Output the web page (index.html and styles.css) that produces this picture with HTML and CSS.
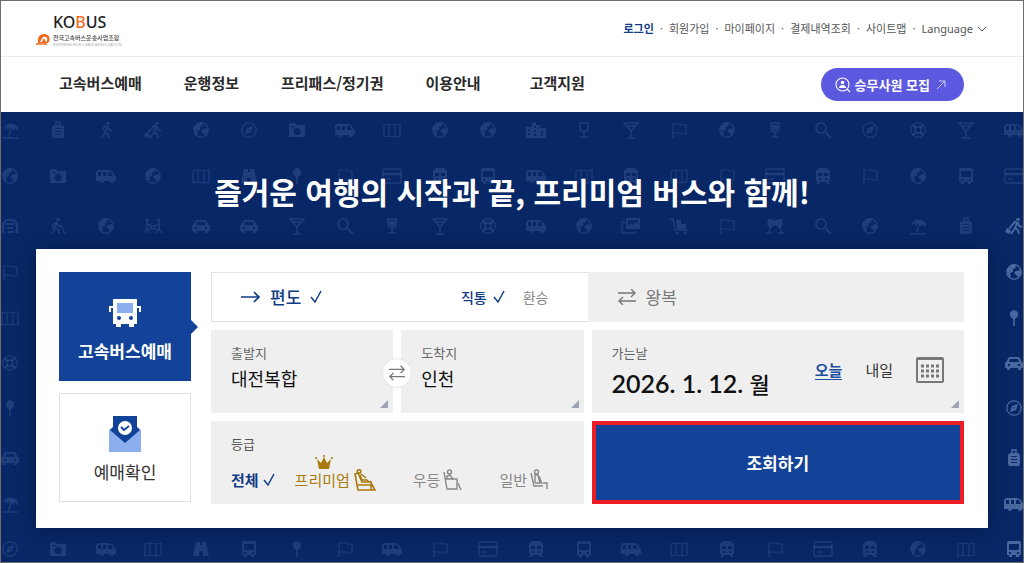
FILE: index.html
```html
<!DOCTYPE html>
<html lang="ko">
<head>
<meta charset="utf-8">
<meta name="viewport" content="width=device-width, initial-scale=1">
<title>KOBUS 전국고속버스운송사업조합</title>
<link rel="stylesheet" href="styles.css">
</head>
<body>
<svg class="sprite" aria-hidden="true">
  <symbol id="palm" viewBox="0 0 20 20"><path d="M2 18h16M9 17c0-4 1-7 3-10" fill="none" stroke="currentColor" stroke-width="1.500"/><path d="M4 9c0-4 4-6 8-5 4 0 7 3 6 7l-3-3-1 3-3-4-4 3V7z" fill="currentColor"/></symbol>
  <symbol id="luggage" viewBox="0 0 20 20"><path d="M8 5V2h4v3" fill="none" stroke="currentColor" stroke-width="1.500"/><path fill-rule="evenodd" d="M6 5h8l2 2v9l-1 2H5l-1-2V7zM7 8v1h6V8zm0 3v1h6v-1zm0 3v1h6v-1z" fill="currentColor"/></symbol>
  <symbol id="walk" viewBox="0 0 20 20"><circle cx="12" cy="3.500" r="1.800" fill="currentColor"/><path d="M6 10l3-4 3 1 1 3 3 1M11 7l-2 5 3 2 1 4M9 12l-1 3-3 3" fill="none" stroke="currentColor" stroke-width="1.700"/></symbol>
  <symbol id="traveler" viewBox="0 0 20 20"><circle cx="14" cy="3.500" r="1.800" fill="currentColor"/><path d="M8 9l3-3 3 1 1 3 3 1M13 7l-2 5 3 2 1 4M11 12l-2 3-2 3M8 9l-3 4" fill="none" stroke="currentColor" stroke-width="2"/><path d="M3 12l4 3-2 3-4-2z" fill="currentColor"/></symbol>
  <symbol id="hiker" viewBox="0 0 20 20"><circle cx="10" cy="3.500" r="1.800" fill="currentColor"/><path d="M9 6l-2 6-3 6M9 6l-4 3v4M9 7l2 3 3 1M8 12l3 2v4M13 9l4 9" fill="none" stroke="currentColor" stroke-width="1.600"/></symbol>
  <symbol id="globe" viewBox="0 0 20 20"><circle cx="10" cy="10" r="7.200" fill="none" stroke="currentColor" stroke-width="1.400"/><path d="M3 8c2-3 5-5 8-5l1 3-3 1v3l-3 1 1 3-2 1zM12 9l4-1 1 3-3 4-2-2-2-2z" fill="currentColor"/></symbol>
  <symbol id="compass" viewBox="0 0 20 20"><circle cx="10" cy="10" r="7.200" fill="none" stroke="currentColor" stroke-width="1.300"/><path fill-rule="evenodd" d="M14 6l-2 6-6 2 2-6zm-4 3-1 1 1 1 1-1z" fill="currentColor"/></symbol>
  <symbol id="camera" viewBox="0 0 20 20"><path fill-rule="evenodd" d="M3 3h5l1 2h9v12H2V5zM10 8a3 3 0 1 0 0 7 3 3 0 0 0 0-7zM4 6v1h4V6z" fill="currentColor"/></symbol>
  <symbol id="van" viewBox="0 0 20 20"><path fill-rule="evenodd" d="M2 4h11l4 2 3 5v4h-2a2 2 0 0 1-4 0H8a2 2 0 0 1-4 0H0V6zm0 2v4h3V6zm5 0v4h3V6zm5 0v4h5l-2-4z" fill="currentColor"/></symbol>
  <symbol id="map" viewBox="0 0 20 20"><path d="M2 5l5-1 6 1 5-1v12l-5 1-6-1-5 1zM7 4v12M13 5v12" fill="none" stroke="currentColor" stroke-width="1.200"/></symbol>
  <symbol id="city" viewBox="0 0 20 20"><path fill-rule="evenodd" d="M0 7h6V3l4-1v3h4v3h6v10H0zM2 9v2h2V9zm6-3v2h2V6zm0 4v2h2v-2zm4-3v2h1V7zm3 4v2h2v-2zM2 13v2h2v-2zm6 1v2h2v-2zm7 0v2h2v-2z" fill="currentColor"/></symbol>
  <symbol id="wine" viewBox="0 0 20 20"><path d="M6 3h8v5c0 5-8 5-8 0zM10 12v5M6 17h8" fill="none" stroke="currentColor" stroke-width="1.500"/><path d="M7 5h6v3c0 3-6 3-6 0z" fill="currentColor"/></symbol>
  <symbol id="glass" viewBox="0 0 20 20"><path d="M6 3h8v5c0 5-8 5-8 0zM10 12v5M6 17h8" fill="none" stroke="currentColor" stroke-width="1.500"/></symbol>
  <symbol id="cocktail" viewBox="0 0 20 20"><path d="M3 3h14l-7 8zM10 10v8M6 18h8M5 6h10" fill="none" stroke="currentColor" stroke-width="1.500"/></symbol>
  <symbol id="flag" viewBox="0 0 20 20"><path d="M4 18V4h7l1 1h5v9h-4l-2-1H4" fill="none" stroke="currentColor" stroke-width="1.200"/></symbol>
  <symbol id="search" viewBox="0 0 20 20"><circle cx="8" cy="8" r="5" fill="none" stroke="currentColor" stroke-width="1.700"/><path d="M12 12l6 6" stroke="currentColor" stroke-width="2"/></symbol>
  <symbol id="ring" viewBox="0 0 20 20"><circle cx="10" cy="10" r="7.200" fill="none" stroke="currentColor" stroke-width="1.300"/><circle cx="10" cy="10" r="3" fill="none" stroke="currentColor" stroke-width="1.300"/><path d="M5 5l3 3M15 5l-3 3M5 15l3-3M15 15l-3-3" stroke="currentColor" stroke-width="2"/></symbol>
  <symbol id="binoculars" viewBox="0 0 20 20"><path d="M5 3h4v3h2V3h4l3 14h-6v-5H8v5H2z" fill="currentColor"/></symbol>
  <symbol id="pin" viewBox="0 0 20 20"><circle cx="10" cy="6.500" r="4.200" fill="currentColor"/><path d="M10 10v8" stroke="currentColor" stroke-width="1.600"/></symbol>
  <symbol id="card" viewBox="0 0 20 20"><rect x="1" y="3" width="18" height="14" rx="1" fill="none" stroke="currentColor" stroke-width="1.300"/><path d="M1 8h18" stroke="currentColor" stroke-width="2.500"/><path d="M4 13h5" stroke="currentColor" stroke-width="1.300"/></symbol>
  <symbol id="train" viewBox="0 0 20 20"><path fill-rule="evenodd" d="M6 2h8l3 3v10h-2l2 3h-3l-1-2H7l-1 2H3l2-3H3V5zm-1 5v3h4V7zm6 0v3h4V7zM6 12v2h2v-2zm6 0v2h2v-2z" fill="currentColor"/></symbol>
  <symbol id="coach" viewBox="0 0 20 20"><path fill-rule="evenodd" d="M4 2h12l1 2v12h-2v2h-3v-2H8v2H5v-2H3V4zm1 3v6h10V5zm0 8v2h2v-2zm8 0v2h2v-2z" fill="currentColor"/></symbol>
  <symbol id="helmet" viewBox="0 0 20 20"><path d="M3 17V9c1-7 13-7 14 0v8" fill="none" stroke="currentColor" stroke-width="2.500"/><path d="M6 8h8M7 12h6M8 16h6" stroke="currentColor" stroke-width="2"/></symbol>
  <symbol id="people" viewBox="0 0 20 20"><g fill="none" stroke="currentColor" stroke-width="1.500"><circle cx="4" cy="4" r="1"/><circle cx="16" cy="4" r="1"/><path d="M4 6v6l-2 5M4 12l3 5M4 8l5 2M16 6v6l2 5M16 12l-3 5M16 8l-5 2M8 10h4v3H8z"/></g></symbol>
  <symbol id="car" viewBox="0 0 20 20"><path fill-rule="evenodd" d="M5 4h10l3 5 1 1v5h-2v2h-3v-2H6v2H3v-2H1v-5l1-1zm1 2L5 9h10l-1-3zM4 11v2h2v-2zm10 0v2h2v-2z" fill="currentColor"/></symbol>
  <symbol id="photos" viewBox="0 0 20 20"><path fill-rule="evenodd" d="M5 2h14v11H5zm2 2v6l3-3 2 2 3-3 2 2V4z" fill="currentColor"/><path d="M4 6H1v11h13v-2" fill="none" stroke="currentColor" stroke-width="1.500"/></symbol>
  <symbol id="cart" viewBox="0 0 20 20"><path d="M1 3h3l2 11h13" fill="none" stroke="currentColor" stroke-width="1.600"/><path d="M7 4h5v4h5v5H8z" fill="currentColor"/><circle cx="8" cy="17" r="1.500" fill="currentColor"/><circle cx="16" cy="17" r="1.500" fill="currentColor"/></symbol>
  <symbol id="cheers" viewBox="0 0 20 20"><path d="M3 3l6 1 1 1 1-1 6-1 1 6-4 3-4-3-4 3-4-3z" fill="currentColor"/><path d="M5 10l-1 6M1 17h6M15 10l1 6M13 17h6" stroke="currentColor" stroke-width="1.500"/></symbol>
  <symbol id="arrow" viewBox="0 0 20 12"><path d="M0 6h18M13 1l5 5-5 5" fill="none" stroke="currentColor" stroke-width="1.700"/></symbol>
  <symbol id="swap" viewBox="0 0 20 16"><path d="M1 4h17M14 0l4 4-4 4M19 12H2M6 8l-4 4 4 4" fill="none" stroke="currentColor" stroke-width="1.400"/></symbol>
  <symbol id="check" viewBox="0 0 12 14"><path d="M1 7l4 5 6-11" fill="none" stroke="currentColor" stroke-width="1.500"/></symbol>
</svg>

<div class="page">
  <header class="header">
    <div class="utility">
      <a class="logo" href="#">
        <svg class="logo-mark" viewBox="0 0 14 12" aria-hidden="true"><path d="M2 10C1 4 4 1 8 1c6 0 7 6 4 9z" fill="#f06a20"/><path d="M4 9l3-5c3-1 5 1 4 4l-1 1-2-4-2 4z" fill="#fff"/><path d="M0 11h11" stroke="#f06a20" stroke-width="1.500"/></svg>
        <span class="logo-text">
          <span class="logo-name">KO<b>B</b>US</span>
          <span class="logo-sub">전국고속버스운송사업조합</span>
          <span class="logo-en">EXPRESS BUS LINES ASSOCIATION</span>
        </span>
      </a>
      <ul class="links">
        <li><a class="login" href="#">로그인</a></li>
        <li><a href="#">회원가입</a></li>
        <li><a href="#">마이페이지</a></li>
        <li><a href="#">결제내역조회</a></li>
        <li><a href="#">사이트맵</a></li>
        <li><button class="language" type="button">Language<svg viewBox="0 0 10 6" aria-hidden="true"><path d="M1 1l4 4 4-4" fill="none" stroke="currentColor"/></svg></button></li>
      </ul>
    </div>
    <nav class="nav">
      <a href="#">고속버스예매</a>
      <a href="#">운행정보</a>
      <a href="#">프리패스/정기권</a>
      <a href="#">이용안내</a>
      <a class="support" href="#">고객지원</a>
      <a class="recruit" href="#">
        <svg class="recruit-icon" viewBox="0 0 16 16" aria-hidden="true"><circle cx="7.500" cy="7.500" r="6.500" fill="none" stroke="currentColor" stroke-width="1.100"/><circle cx="7.500" cy="5.500" r="1.800" fill="currentColor"/><path d="M4 11c0-4 7-4 7 0z" fill="currentColor"/><path d="M12 12l3 3" stroke="currentColor" stroke-width="1.300"/></svg>
        승무사원 모집
        <svg class="recruit-arrow" viewBox="0 0 10 10" aria-hidden="true"><path d="M1 9l8-8M3 1h6v6" fill="none" stroke="currentColor"/></svg>
      </a>
    </nav>
  </header>

  <main class="hero">
    <div class="pattern" id="pattern" aria-hidden="true"></div>
    <h1 class="title">즐거운 여행의 시작과 끝, 프리미엄 버스와 함께!</h1>
    <section class="booking">
      <div class="tabs">
        <button class="tab tab-active" type="button">
          <svg class="tab-bus" viewBox="0 0 34 28" aria-hidden="true"><path d="M5 0h24v25h-3v3h-5v-3h-8v3H8v-3H5z" fill="#fff"/><path d="M5 8H2v5M29 8h3v5" fill="none" stroke="#fff" stroke-width="2"/><path d="M9 4h16v10H9z" fill="#8aaeee"/><circle cx="11" cy="19" r="2" fill="#124398"/><circle cx="23" cy="19" r="2" fill="#124398"/></svg>
          고속버스예매
        </button>
        <button class="tab" type="button">
          <svg class="tab-mail" viewBox="0 0 32 36" aria-hidden="true"><path d="M0 14l4-3h24l4 3v22H0z" fill="#8aaeee"/><path d="M4 0h24v11l3 3-15 13L1 14l3-3z" fill="#124398"/><circle cx="16" cy="12" r="7" fill="#fff"/><path d="M12 11l3 3 5-4" fill="none" stroke="#124398" stroke-width="1.800"/></svg>
          예매확인
        </button>
      </div>
      <form class="form">
        <div class="trip">
          <div class="trip-side trip-oneway">
            <label class="choice"><input type="radio" name="trip" checked><svg class="i-arrow" aria-hidden="true"><use href="#arrow"/></svg>편도<svg class="i-check" aria-hidden="true"><use href="#check"/></svg></label>
            <div class="route">
              <label class="choice route-on"><input type="radio" name="route" checked>직통<svg class="i-check" aria-hidden="true"><use href="#check"/></svg></label>
              <label class="choice"><input type="radio" name="route">환승</label>
            </div>
          </div>
          <div class="trip-side trip-round">
            <label class="choice"><input type="radio" name="trip"><svg class="i-swap" aria-hidden="true"><use href="#swap"/></svg>왕복</label>
          </div>
        </div>
        <div class="places">
          <button class="field corner" type="button"><span class="caption">출발지</span><span class="value">대전복합</span></button>
          <button class="field corner" type="button"><span class="caption">도착지</span><span class="value">인천</span></button>
          <button class="swap" type="button" aria-label="출발지 도착지 교체"><svg aria-hidden="true"><use href="#swap"/></svg></button>
        </div>
        <div class="field corner date">
          <div>
            <span class="caption">가는날</span>
            <span class="day">2026. 1. 12. <span class="weekday">월</span></span>
          </div>
          <div class="quick">
            <button class="today" type="button">오늘</button>
            <button type="button">내일</button>
            <button class="calendar" type="button" aria-label="달력"><svg viewBox="0 0 28 26" aria-hidden="true"><rect x="1" y="1" width="26" height="24" rx="1" fill="none" stroke="#777" stroke-width="2"/><path d="M1 2h26" stroke="#777" stroke-width="2"/><path d="M5 9h18M5 14h18M5 19h18" stroke="#777" stroke-width="3" stroke-dasharray="3 2"/></svg></button>
          </div>
        </div>
        <fieldset class="field grades">
          <legend class="caption">등급</legend>
          <div class="grade-list">
            <label class="choice grade-all"><input type="radio" name="grade" checked>전체<svg class="i-check" aria-hidden="true"><use href="#check"/></svg></label>
            <label class="choice premium"><input type="radio" name="grade"><svg class="crown" viewBox="0 0 18 14" aria-hidden="true"><path d="M2 4l4 4 3-6 3 6 4-4-2 10H4z" fill="currentColor"/><circle cx="1" cy="3" r="1" fill="currentColor"/><circle cx="9" cy="1" r="1" fill="currentColor"/><circle cx="17" cy="3" r="1" fill="currentColor"/></svg>프리미엄<svg class="seat" viewBox="0 0 22 22" aria-hidden="true"><g fill="none" stroke="currentColor" stroke-width="1.600"><path d="M4 21L1 5l3-1 4 9h9v8zM4 16h13M16 12l5 9h-4"/><circle cx="5" cy="2.500" r="1.800"/><path d="M6 6l2 5h5l2 2M7 5l5 4"/></g></svg></label>
            <label class="choice"><input type="radio" name="grade">우등<svg class="seat seat-mid" viewBox="0 0 19 22" aria-hidden="true"><g fill="none" stroke="currentColor" stroke-width="1.400"><path d="M1 3l3 17h10V10H5M2 10h4"/><circle cx="6.500" cy="3" r="2"/><path d="M4 10V7l3-1 3 4M15 14l3 7"/></g></svg></label>
            <label class="choice"><input type="radio" name="grade">일반<svg class="seat seat-mid" viewBox="0 0 19 22" aria-hidden="true"><g fill="none" stroke="currentColor" stroke-width="1.400"><path d="M1 4l3 13h9M13 14h4v6"/><circle cx="6.500" cy="3" r="2"/><path d="M5 14V6h3l2 8H5M9 7l3 8"/></g></svg></label>
          </div>
        </fieldset>
        <button class="submit" type="submit">조회하기</button>
      </form>
    </section>
  </main>
</div>
<script src="pattern.js"></script>
</body>
</html>
```

FILE: styles.css
```css
* { box-sizing: border-box; }

body {
  margin: 0;
  font-family: "Noto Sans CJK KR", sans-serif;
  color: #222;
}

a { color: inherit; text-decoration: none; }

button {
  margin: 0;
  padding: 0;
  border: 0;
  background: none;
  color: inherit;
  font: inherit;
  cursor: pointer;
}

svg { display: block; flex: none; }

.sprite { position: absolute; width: 0; height: 0; }

.page {
  display: flex;
  flex-direction: column;
  min-height: 100vh;
  border: 1px solid #6e6e6e;
}

.header { background: #fff; }

.utility {
  display: flex;
  justify-content: space-between;
  align-items: center;
  height: 56px;
  padding: 0 36px 0 35px;
  border-bottom: 1px solid #ececec;
}

.logo {
  display: flex;
  align-items: flex-end;
  gap: 3px;
}

.logo-mark { width: 14px; height: 12px; margin-bottom: 2px; }

.logo-text { display: flex; flex-direction: column; }

.logo-name {
  font: 500 16px/22px "Noto Sans", sans-serif;
  color: #222;
}

.logo-name b { font-weight: 500; color: #f06a20; }

.logo-sub { font-size: 6px; line-height: 9px; font-weight: 500; color: #444; }

.logo-en { font: 4px/5px "Liberation Sans", sans-serif; color: #aaa; }

.links {
  display: flex;
  margin: 0;
  padding: 0;
  list-style: none;
  font-size: 11px;
  line-height: 16px;
  color: #555;
}

.links li + li::before { content: "·"; margin: 0 6px; }

.login { font-weight: 700; color: #123c85; }

.language {
  display: inline-flex;
  align-items: center;
  gap: 4px;
  font-family: "Noto Sans", sans-serif;
}

.language svg { width: 10px; height: 6px; }

.nav {
  display: flex;
  align-items: center;
  gap: 42px;
  height: 55px;
  padding: 0 59px 0 58px;
  font-size: 15px;
  line-height: 24px;
  font-weight: 700;
  color: #2a2a2a;
}

.nav > a:not(.recruit) { padding-bottom: 3px; }

.support { margin-left: 7px; }

.recruit {
  display: flex;
  align-items: center;
  gap: 4px;
  height: 33px;
  margin-left: auto;
  padding: 0 18px 0 14px;
  border-radius: 17px;
  background: #5c58df;
  color: #fff;
  font-size: 13px;
}

.recruit-icon { width: 16px; height: 16px; }
.recruit-arrow { width: 10px; height: 10px; margin-left: 2px; opacity: 0.7; }

.hero {
  position: relative;
  flex: 1;
  padding: 56px 35px 34px;
  overflow: hidden;
  background: #072766;
}

.pattern {
  position: absolute;
  inset: 8px 0 0 0;
  display: grid;
  grid-template-rows: 46px 50px 46px 46px 45px 45px 50px 46px 45px;
  margin: 0 -1px;
  color: rgba(140, 165, 215, 0.18);
}

.pattern-row { display: flex; justify-content: space-between; }
.pattern svg { width: 20px; height: 20px; }
.pattern-lit svg:last-child { color: rgba(140, 165, 215, 0.5); }

.title {
  position: relative;
  margin: 0 0 35px;
  text-align: center;
  color: #fff;
  font-size: 30px;
  line-height: 46px;
  font-weight: 700;
}

.booking {
  position: relative;
  display: flex;
  gap: 20px;
  padding: 23px 24px 24px 23px;
  background: #fff;
  box-shadow: 0 0 20px rgba(0, 0, 0, 0.3);
}

.tabs {
  display: flex;
  flex: none;
  flex-direction: column;
  gap: 12px;
  width: 132px;
}

.tab {
  display: flex;
  flex-direction: column;
  align-items: center;
  height: 109px;
  padding-top: 22px;
  border: 1px solid #e2e2e2;
  font-size: 17px;
  line-height: 28px;
  color: #333;
}

.tab-active {
  position: relative;
  padding-top: 26px;
  border-color: #124398;
  background: #124398;
  color: #fff;
  font-weight: 700;
}

.tab-active::after {
  content: "";
  position: absolute;
  top: 46px;
  left: 100%;
  border: 8px solid transparent;
  border-left-color: #124398;
  border-right-width: 0;
}

.tab-bus { width: 34px; height: 28px; margin-bottom: 10px; }
.tab-mail { width: 32px; height: 36px; margin-bottom: 6px; }

.form {
  flex: 1;
  display: grid;
  grid-template-columns: 1fr 1fr;
  grid-template-rows: 50px 83px 83px;
  gap: 8px;
}

.choice {
  position: relative;
  display: flex;
  align-items: center;
  cursor: pointer;
}

.choice input {
  position: absolute;
  width: 1px;
  height: 1px;
  margin: 0;
  opacity: 0;
}

.trip {
  grid-column: 1 / -1;
  display: grid;
  grid-template-columns: 1fr 1fr;
}

.trip-side {
  display: flex;
  justify-content: space-between;
  align-items: center;
  padding: 0 39px 0 29px;
  font-size: 17px;
  line-height: 24px;
}

.trip-side .choice { padding-bottom: 1px; }

.trip-oneway { border: 1px solid #e2e2e2; border-right: 0; color: #123c85; font-weight: 500; }
.trip-round { background: #efefef; color: #777; }

.route {
  display: flex;
  gap: 18px;
  font-size: 14px;
  font-weight: 400;
  color: #888;
}

.route-on { color: #123c85; font-weight: 500; }

.i-arrow { width: 20px; height: 12px; margin-right: 9px; }
.i-swap { width: 20px; height: 16px; margin-right: 9px; }
.i-check { width: 12px; height: 14px; margin-left: 6px; }
.trip-oneway > .choice .i-check { margin-left: 9px; }

.places {
  position: relative;
  display: grid;
  grid-template-columns: 1fr 1fr;
  gap: 8px;
}

.field {
  position: relative;
  display: flex;
  flex-direction: column;
  min-width: 0;
  margin: 0;
  padding: 13px 20px 0;
  border: 0;
  background: #efefef;
  text-align: left;
}

.corner::after {
  content: "";
  position: absolute;
  right: 5px;
  bottom: 5px;
  border: 4px solid #9da3b3;
  border-top-color: transparent;
  border-left-color: transparent;
}

.caption {
  display: block;
  padding: 0;
  font-size: 13px;
  line-height: 20px;
  color: #666;
}

.value {
  margin-top: 1px;
  font-size: 18px;
  line-height: 28px;
  color: #111;
}

.swap {
  position: absolute;
  top: 50%;
  left: 50%;
  display: grid;
  place-items: center;
  width: 30px;
  height: 30px;
  margin: -14px 0 0 -15px;
  border: 1px solid #e6e6e6;
  border-radius: 50%;
  background: #fff;
  color: #777;
}

.swap svg { width: 18px; height: 16px; }

.date { flex-direction: row; justify-content: space-between; }

.day {
  display: block;
  margin-top: 2px;
  font: 600 25px/36px Lato, "Noto Sans CJK KR", sans-serif;
  color: #111;
}

.weekday { font-size: 22px; font-weight: 500; }

.quick {
  display: flex;
  align-items: center;
  gap: 23px;
  height: 54px;
  font-size: 15px;
  line-height: 20px;
  color: #333;
}

.quick .today {
  border-bottom: 1px solid #1d4f9f;
  color: #1d4f9f;
  font-weight: 700;
  line-height: 18px;
}

.calendar svg { width: 28px; height: 26px; }

.grades .caption { float: left; color: #555; }

.grade-list {
  display: flex;
  gap: 37px;
  margin-top: 14px;
  clear: both;
  font-size: 15px;
  line-height: 24px;
  color: #888;
}

.grade-all { margin-right: -17px; color: #123c85; font-weight: 700; }
.grade-all .i-check { margin-left: 4px; }

.premium { color: #aa7b0c; }

.crown {
  position: absolute;
  top: -13px;
  left: 20px;
  width: 18px;
  height: 14px;
}

.seat { width: 22px; height: 22px; margin-left: 4px; }
.seat-mid { width: 19px; margin-left: 3px; }

.submit {
  border: 4px solid #ee1c25;
  background: #124398;
  color: #fff;
  font-size: 17px;
  font-weight: 700;
}
```

FILE: pattern.js
```js
const rows = [
  "palm luggage walk traveler globe compass camera van map globe globe city glass cocktail flag globe wine search compass ring cocktail van",
  "globe camera van globe map binoculars pin flag card train coach van map train map flag card train flag globe coach card",
  "helmet hiker globe people car car cocktail search wine cocktail ring van globe photos cart flag cheers search globe palm luggage traveler",
  "flag globe",
  "map pin",
  "ring car",
  "pin compass",
  "car luggage",
  "palm van",
  "compass camera van map binoculars coach pin flag van flag card train coach van map train flag card train globe map coach"
];

document.getElementById("pattern").innerHTML = rows.map((row, i) => {
  const icons = row.split(" ").map(name => `<svg><use href="#${name}"/></svg>`).join("");
  return `<div class="pattern-row${i > 1 ? " pattern-lit" : ""}">${icons}</div>`;
}).join("");
```
